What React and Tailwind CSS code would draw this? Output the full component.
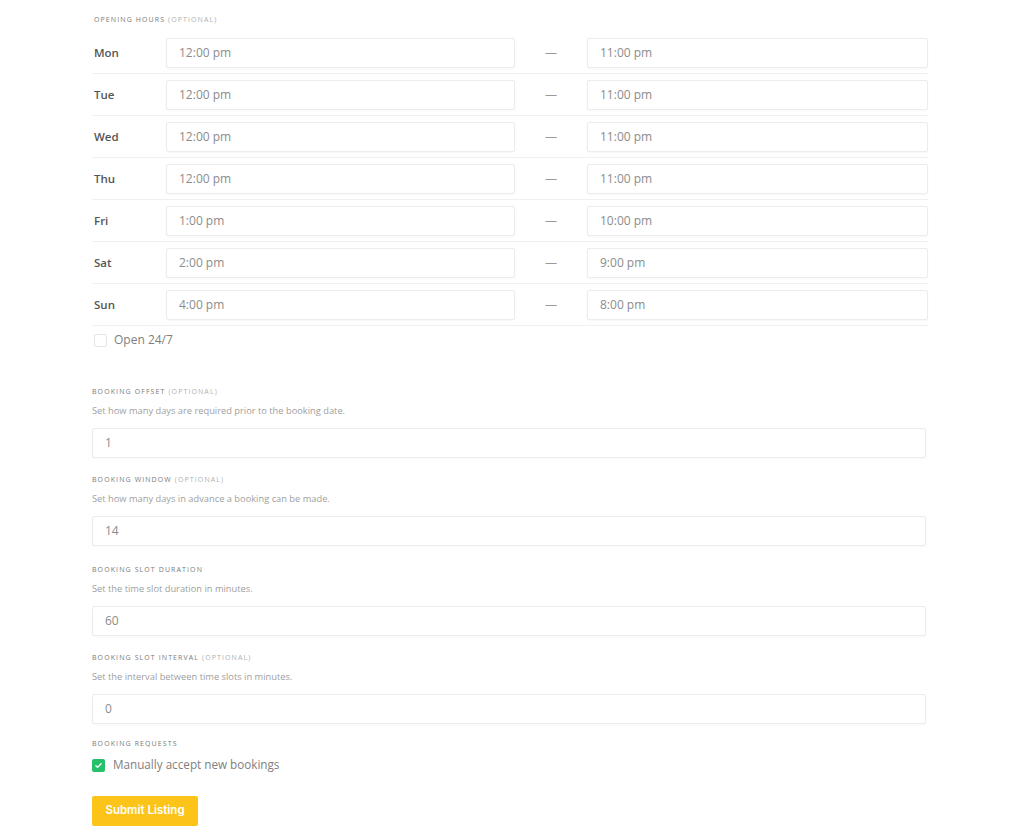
import React from 'react';

const hours = [
  { day: 'Mon', from: '12:00 pm', to: '11:00 pm' },
  { day: 'Tue', from: '12:00 pm', to: '11:00 pm' },
  { day: 'Wed', from: '12:00 pm', to: '11:00 pm' },
  { day: 'Thu', from: '12:00 pm', to: '11:00 pm' },
  { day: 'Fri', from: '1:00 pm', to: '10:00 pm' },
  { day: 'Sat', from: '2:00 pm', to: '9:00 pm' },
  { day: 'Sun', from: '4:00 pm', to: '8:00 pm' },
];

const fields = [
  { label: 'Booking offset', optional: true, desc: 'Set how many days are required prior to the booking date.', value: '1', mt: 'mt-[39px]' },
  { label: 'Booking window', optional: true, desc: 'Set how many days in advance a booking can be made.', value: '14', mt: 'mt-[16px]' },
  { label: 'Booking slot duration', optional: false, desc: 'Set the time slot duration in minutes.', value: '60', mt: 'mt-[18px]' },
  { label: 'Booking slot interval', optional: true, desc: 'Set the interval between time slots in minutes.', value: '0', mt: 'mt-[16px]' },
];

function Label({ text, optional }) {
  return (
    <div className="h-[12px] leading-[12px] text-[7px] uppercase tracking-[1.1px] text-[#7a7a7a]">
      {text}
      {optional && <span className="text-[#b0b0b0]"> (optional)</span>}
    </div>
  );
}

function Field({ value, className = '' }) {
  return (
    <div className={`h-[30px] flex items-center border border-[#ececec] rounded-[2px] bg-white pl-[12px] text-[12px] text-[#8c8c8c] shadow-[0_1px_2px_rgba(0,0,0,0.03)] ${className}`}>
      {value}
    </div>
  );
}

export default function App() {
  return (
    <div className="min-h-[838px] bg-white pt-[14px] pb-[12px] pl-[92px]" style={{ fontFamily: '"Open Sans", "Liberation Sans", sans-serif' }}>
      <div className="w-[836px]">
        <div className="pl-[2px] mb-[6px]">
          <Label text="Opening hours" optional />
        </div>

        {/* opening hours rows */}
        <div>
          {hours.map(h => (
            <div key={h.day} className="h-[42px] pt-[1px] flex items-center border-b border-[#f0f0f0]">
              <div className="w-[74px] pl-[2px] text-[11.5px] font-semibold text-[#555]">{h.day}</div>
              <Field value={h.from} className="w-[349px]" />
              <div className="w-[72px] text-center text-[12px] text-[#999]">—</div>
              <Field value={h.to} className="flex-1" />
            </div>
          ))}
        </div>

        <div className="mt-[7px] h-[14px] flex items-center pl-[2px]">
          <span className="w-[13px] h-[13px] border border-[#e4e4e4] rounded-[2px] bg-white" />
          <span className="ml-[7px] text-[12px] text-[#808080]">Open 24/7</span>
        </div>

        {fields.map(f => (
          <div key={f.label} className={`${f.mt} w-[834px]`}>
            <Label text={f.label} optional={f.optional} />
            <div className="mt-[6px] h-[14px] leading-[14px] text-[9.3px] text-[#a0a0a0]">{f.desc}</div>
            <Field value={f.value} className="mt-[10px]" />
          </div>
        ))}

        <div className="mt-[14px]">
          <Label text="Booking requests" />
        </div>
        <div className="mt-[8px] h-[14px] flex items-center">
          <span className="w-[13px] h-[13px] rounded-[2px] bg-[#27c06a] flex items-center justify-center">
            <svg width="9" height="9" viewBox="0 0 24 24" fill="none" stroke="white" strokeWidth="3.5" strokeLinecap="round" strokeLinejoin="round">
              <path d="M5 12.5l4.5 4.5L19 7.5" />
            </svg>
          </span>
          <span className="ml-[8px] text-[11.7px] text-[#808080]">Manually accept new bookings</span>
        </div>

        <button className="mt-[24px] h-[30px] w-[106px] rounded-[2px] bg-[#fcc419] text-white text-[11.5px] font-semibold" style={{ fontFamily: 'Inter, "Open Sans", sans-serif' }}>
          Submit Listing
        </button>
      </div>
    </div>
  );
}
